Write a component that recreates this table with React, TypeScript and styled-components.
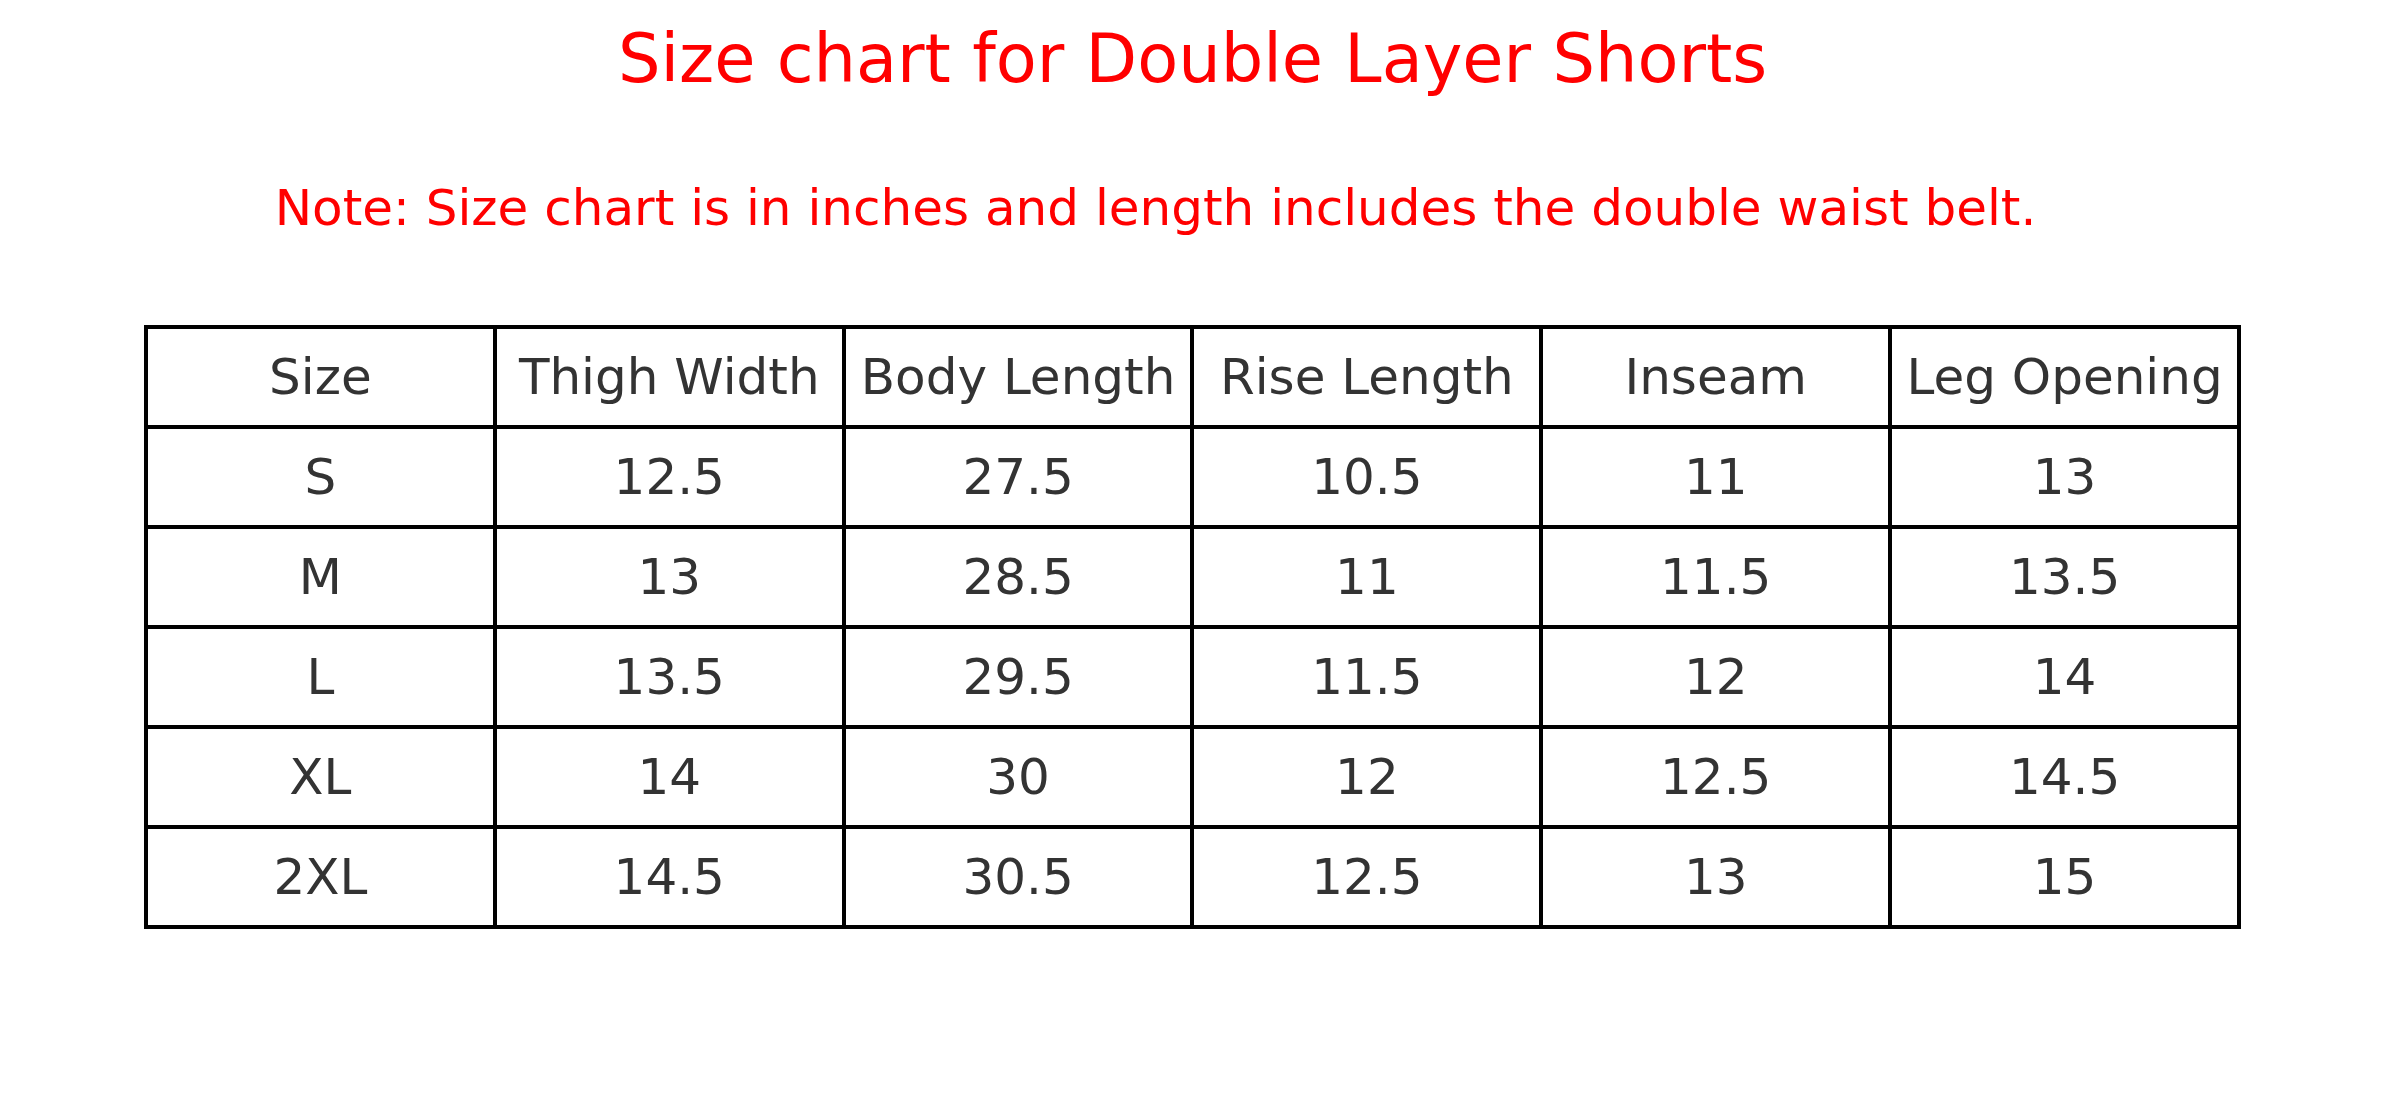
import React from 'react';
import styled, { createGlobalStyle } from 'styled-components';

const GlobalStyle = createGlobalStyle`
  html, body {
    margin: 0;
    padding: 0;
    background: #ffffff;
  }
  body {
    font-family: "DejaVu Sans", "Liberation Sans", sans-serif;
  }
`;

const Page = styled.div`
  width: 2385px;
  height: 1119px;
  display: flex;
  flex-direction: column;
  align-items: center;
  padding-top: 19px;
  box-sizing: border-box;
`;

const Title = styled.h1`
  margin: 0;
  font-size: 67px;
  line-height: 80px;
  font-weight: normal;
  color: #ff0000;
`;

const Note = styled.p`
  margin: 79px 74px 0 0;
  font-size: 50px;
  line-height: 60px;
  color: #ff0000;
`;

const Table = styled.table`
  margin-top: 87px;
  width: 2097px;
  border-collapse: collapse;
  table-layout: fixed;
`;

const Cell = styled.td`
  border: 4px solid #000000;
  height: 96px;
  padding: 0;
  text-align: center;
  vertical-align: middle;
  font-size: 50px;
  color: #333333;
  white-space: nowrap;
`;

const headers = ['Size', 'Thigh Width', 'Body Length', 'Rise Length', 'Inseam', 'Leg Opening'];

const rows = [
  ['S', '12.5', '27.5', '10.5', '11', '13'],
  ['M', '13', '28.5', '11', '11.5', '13.5'],
  ['L', '13.5', '29.5', '11.5', '12', '14'],
  ['XL', '14', '30', '12', '12.5', '14.5'],
  ['2XL', '14.5', '30.5', '12.5', '13', '15'],
];

function App() {
  return (
    <Page>
      <GlobalStyle />
      <Title>Size chart for Double Layer Shorts</Title>
      <Note>Note: Size chart is in inches and length includes the double waist belt.</Note>
      <Table>
        <tbody>
          <tr>
            {headers.map((h) => (
              <Cell key={h}>{h}</Cell>
            ))}
          </tr>
          {rows.map((r) => (
            <tr key={r[0]}>
              {r.map((v, i) => (
                <Cell key={i}>{v}</Cell>
              ))}
            </tr>
          ))}
        </tbody>
      </Table>
    </Page>
  );
}

export default App;
